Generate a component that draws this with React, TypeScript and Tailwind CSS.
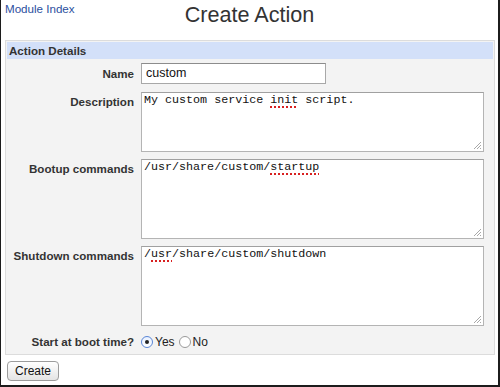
import React from 'react';

const Grip = () => (
  <svg className="absolute right-[1px] bottom-[1px]" width="10" height="10" viewBox="0 0 10 10">
    <line x1="9" y1="2" x2="2" y2="9" stroke="#a8a8a8" strokeWidth="1" />
    <line x1="9" y1="5" x2="5" y2="9" stroke="#a8a8a8" strokeWidth="1" />
    <line x1="9" y1="8" x2="8" y2="9" stroke="#a8a8a8" strokeWidth="1" />
  </svg>
);

const Spell = ({ children }: { children: React.ReactNode }) => (
  <span className="underline decoration-dotted decoration-[#d82020] decoration-2 underline-offset-[3px]">
    {children}
  </span>
);

const TextBox = ({ h, children }: { h: string; children: React.ReactNode }) => (
  <div
    className={`relative w-[343px] ${h} bg-white border border-[#b4b4b4] border-t-[#a0a0a0] px-[2px] pt-[1px] text-[11.7px] leading-[13px] text-[#111] whitespace-pre`}
    style={{ fontFamily: '"Liberation Mono", "DejaVu Sans Mono", monospace' }}
  >
    {children}
    <Grip />
  </div>
);

const Label = ({ children, top }: { children: React.ReactNode; top?: boolean }) => (
  <div className={`w-[127px] shrink-0 text-right font-bold text-[#333] leading-[14px] ${top ? 'pt-[3px]' : ''}`}>
    {children}
  </div>
);

const Radio = ({ checked }: { checked?: boolean }) => (
  <span
    className={`inline-flex items-center justify-center w-[12px] h-[12px] rounded-full border ${
      checked ? 'border-[#5a86d6] bg-gradient-to-b from-[#e8f0ff] to-[#ffffff]' : 'border-[#9a9a9a] bg-white'
    }`}
  >
    {checked && <span className="w-[4px] h-[4px] rounded-full bg-[#222]" />}
  </span>
);

export default function App() {
  return (
    <div
      className="w-[500px] h-[387px] bg-white border-l border-r-2 border-b-2 border-[#1c1c1c] flex flex-col text-[11.6px] text-[#333]"
      style={{ fontFamily: '"Liberation Sans", Arial, sans-serif' }}
    >
      <div className="h-[40px] grid grid-cols-[1fr_auto_1fr]">
        <a className="pl-[4px] pt-[2px] leading-[14px] text-[#2c4f9e] cursor-pointer">Module Index</a>
        <h1 className="text-[21.6px] leading-[26px] pt-[2px] text-[#333]">Create Action</h1>
        <div />
      </div>

      <div className="ml-[4px] mr-[3px] border border-[#dcdcdc] bg-[#f3f3f3] p-[1px]">
        <div className="h-[17px] bg-[#d3e0f9] pl-[2px] font-bold leading-[17px] text-[#333]">Action Details</div>

        <div className="flex flex-col pt-[4px] pb-[3px]">
          <div className="flex items-center gap-[7px]">
            <Label>Name</Label>
            <div className="w-[185px] h-[21px] bg-white border border-[#a8a8a8] border-t-[#8c8c8c] pl-[4px] flex items-center text-[12.5px] text-[#111]">
              custom
            </div>
          </div>

          <div className="flex items-start gap-[7px] mt-[8px]">
            <Label top>Description</Label>
            <TextBox h="h-[60px]">
              My custom service <Spell>init</Spell> script.
            </TextBox>
          </div>

          <div className="flex items-start gap-[7px] mt-[7px]">
            <Label top>Bootup commands</Label>
            <TextBox h="h-[80px]">
              /usr/share/custom/<Spell>startup</Spell>
            </TextBox>
          </div>

          <div className="flex items-start gap-[7px] mt-[7px]">
            <Label top>Shutdown commands</Label>
            <TextBox h="h-[80px]">
              /<Spell>usr</Spell>/share/custom/shutdown
            </TextBox>
          </div>

          <div className="flex items-center gap-[7px] mt-[7px] h-[17px]">
            <Label>Start at boot time?</Label>
            <div className="flex items-center text-[#222] text-[12px]">
              <Radio checked />
              <span className="ml-[2px] mr-[4px]">Yes</span>
              <Radio />
              <span className="ml-[2px]">No</span>
            </div>
          </div>
        </div>
      </div>

      <div className="pl-[6px] pt-[6px]">
        <button className="w-[52px] h-[20px] rounded-[4px] border border-[#9c9c9c] bg-gradient-to-b from-[#ffffff] to-[#e4e4e4] text-[12px] text-[#111] leading-[18px]">
          Create
        </button>
      </div>
    </div>
  );
}
